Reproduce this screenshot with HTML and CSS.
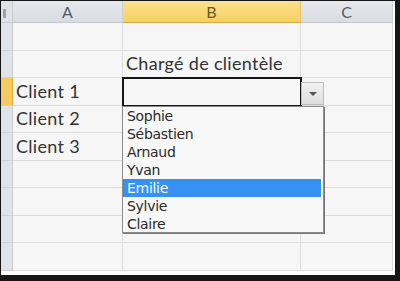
FILE: index.html
```html
<!DOCTYPE html>
<html lang="fr">
<head>
    <meta charset="UTF-8">
    <meta name="viewport" content="width=device-width, initial-scale=1.0">
    <title>Liste déroulante</title>
    <link rel="stylesheet" href="styles.css">
</head>
<body>
    <div class="frame">
        <div class="sheet">
            <!-- Column headers -->
            <div class="corner"><span class="corner-mark"></span></div>
            <div class="col-head">A</div>
            <div class="col-head active">B</div>
            <div class="col-head">C</div>

            <!-- Row 1 -->
            <div class="row-head"></div>
            <div class="cell"></div>
            <div class="cell"></div>
            <div class="cell"></div>

            <!-- Row 2 -->
            <div class="row-head"></div>
            <div class="cell"></div>
            <div class="cell">Chargé de clientèle</div>
            <div class="cell"></div>

            <!-- Row 3 -->
            <div class="row-head active"></div>
            <div class="cell">Client 1</div>
            <div class="cell selected">
                <span class="drop-btn"><span class="arrow"></span></span>
                <ul class="drop-list">
                    <li>Sophie</li>
                    <li>Sébastien</li>
                    <li>Arnaud</li>
                    <li>Yvan</li>
                    <li class="hover">Emilie</li>
                    <li>Sylvie</li>
                    <li>Claire</li>
                </ul>
            </div>
            <div class="cell"></div>

            <!-- Row 4 -->
            <div class="row-head"></div>
            <div class="cell">Client 2</div>
            <div class="cell"></div>
            <div class="cell"></div>

            <!-- Row 5 -->
            <div class="row-head"></div>
            <div class="cell">Client 3</div>
            <div class="cell"></div>
            <div class="cell"></div>

            <!-- Rows 6 - 9 -->
            <div class="row-head"></div>
            <div class="cell"></div>
            <div class="cell"></div>
            <div class="cell"></div>

            <div class="row-head"></div>
            <div class="cell"></div>
            <div class="cell"></div>
            <div class="cell"></div>

            <div class="row-head"></div>
            <div class="cell"></div>
            <div class="cell"></div>
            <div class="cell"></div>

            <div class="row-head"></div>
            <div class="cell"></div>
            <div class="cell"></div>
            <div class="cell"></div>
        </div>
    </div>
</body>
</html>
```

FILE: styles.css
```css
/* Page */
body {
    margin: 0;
    background: #161616;
    width: 400px;
    height: 281px;
    overflow: hidden;
}

.frame {
    margin: 1px 0 0 1px;
    width: 392px;
    height: 271px;
    padding: 0 2px 3px 0;
    background: #ffffff;
}

/* Grid */
.sheet {
    display: grid;
    grid-template-columns: 12px 110px 178px 92px;
    grid-template-rows: 22px 28px 27px 28px 27px 28px 27px 28px 27px 28px;
    background: #f6f6f7;
    font-family: Lato, "Open Sans", sans-serif;
    color: #333;
}

.corner {
    background: #dfe2e7;
    border-right: 1px solid #c9cdd3;
    border-bottom: 1px solid #c5c9cf;
    position: relative;
}

.corner-mark {
    position: absolute;
    left: 2px;
    top: 8px;
    width: 3px;
    height: 9px;
    background: #9ea3aa;
}

.col-head {
    display: flex;
    align-items: center;
    justify-content: center;
    background: linear-gradient(#e4e7eb, #d9dde2);
    border-right: 1px solid #cfd3d8;
    border-bottom: 1px solid #c3c7cd;
    font-size: 16px;
    color: #555a61;
}

.col-head.active {
    background: linear-gradient(#fbe28f, #f6cf5f);
    border-bottom-color: #e0a93a;
    border-right-color: #e6c36a;
    color: #6b5a2a;
}

.row-head {
    background: #e0e3e8;
    border-right: 1px solid #c9cdd3;
    border-bottom: 1px solid #cdd1d6;
}

.row-head.active {
    background: #f6cb60;
    border-right-color: #e0a93a;
}

.cell {
    display: flex;
    align-items: flex-end;
    padding: 0 3px 3px;
    border-right: 1px solid #dcdcdc;
    border-bottom: 1px solid #dcdcdc;
    font-size: 18px;
    letter-spacing: 0.3px;
    white-space: nowrap;
}

.cell.selected {
    position: relative;
    outline: 2px solid #151515;
    outline-offset: -1px;
    z-index: 2;
}

/* Dropdown */
.drop-btn {
    position: absolute;
    left: calc(100% + 1px);
    top: 4px;
    width: 23px;
    height: 23px;
    background: linear-gradient(#f0f0f0, #dedede);
    border: 1px solid #bdbdbd;
    box-sizing: border-box;
    display: flex;
    align-items: center;
    justify-content: center;
}

.arrow {
    width: 0;
    height: 0;
    border-left: 4px solid transparent;
    border-right: 4px solid transparent;
    border-top: 4px solid #555;
}

.drop-list {
    position: absolute;
    left: -1px;
    top: calc(100% + 1px);
    width: 200px;
    height: 125px;
    margin: 0;
    padding: 0;
    list-style: none;
    background: #f8f8f8;
    border: 1px solid #8a8a8a;
    box-shadow: 1px 1px 0 #777;
    font-family: "DejaVu Sans", sans-serif;
    font-size: 14px;
    color: #2a2a2a;
    letter-spacing: -0.3px;
}

.drop-list li {
    height: 18px;
    line-height: 18px;
    padding-left: 4px;
}

.drop-list li.hover {
    background: #3592f2;
    color: #f4f8ff;
    margin-right: 2px;
}
```
